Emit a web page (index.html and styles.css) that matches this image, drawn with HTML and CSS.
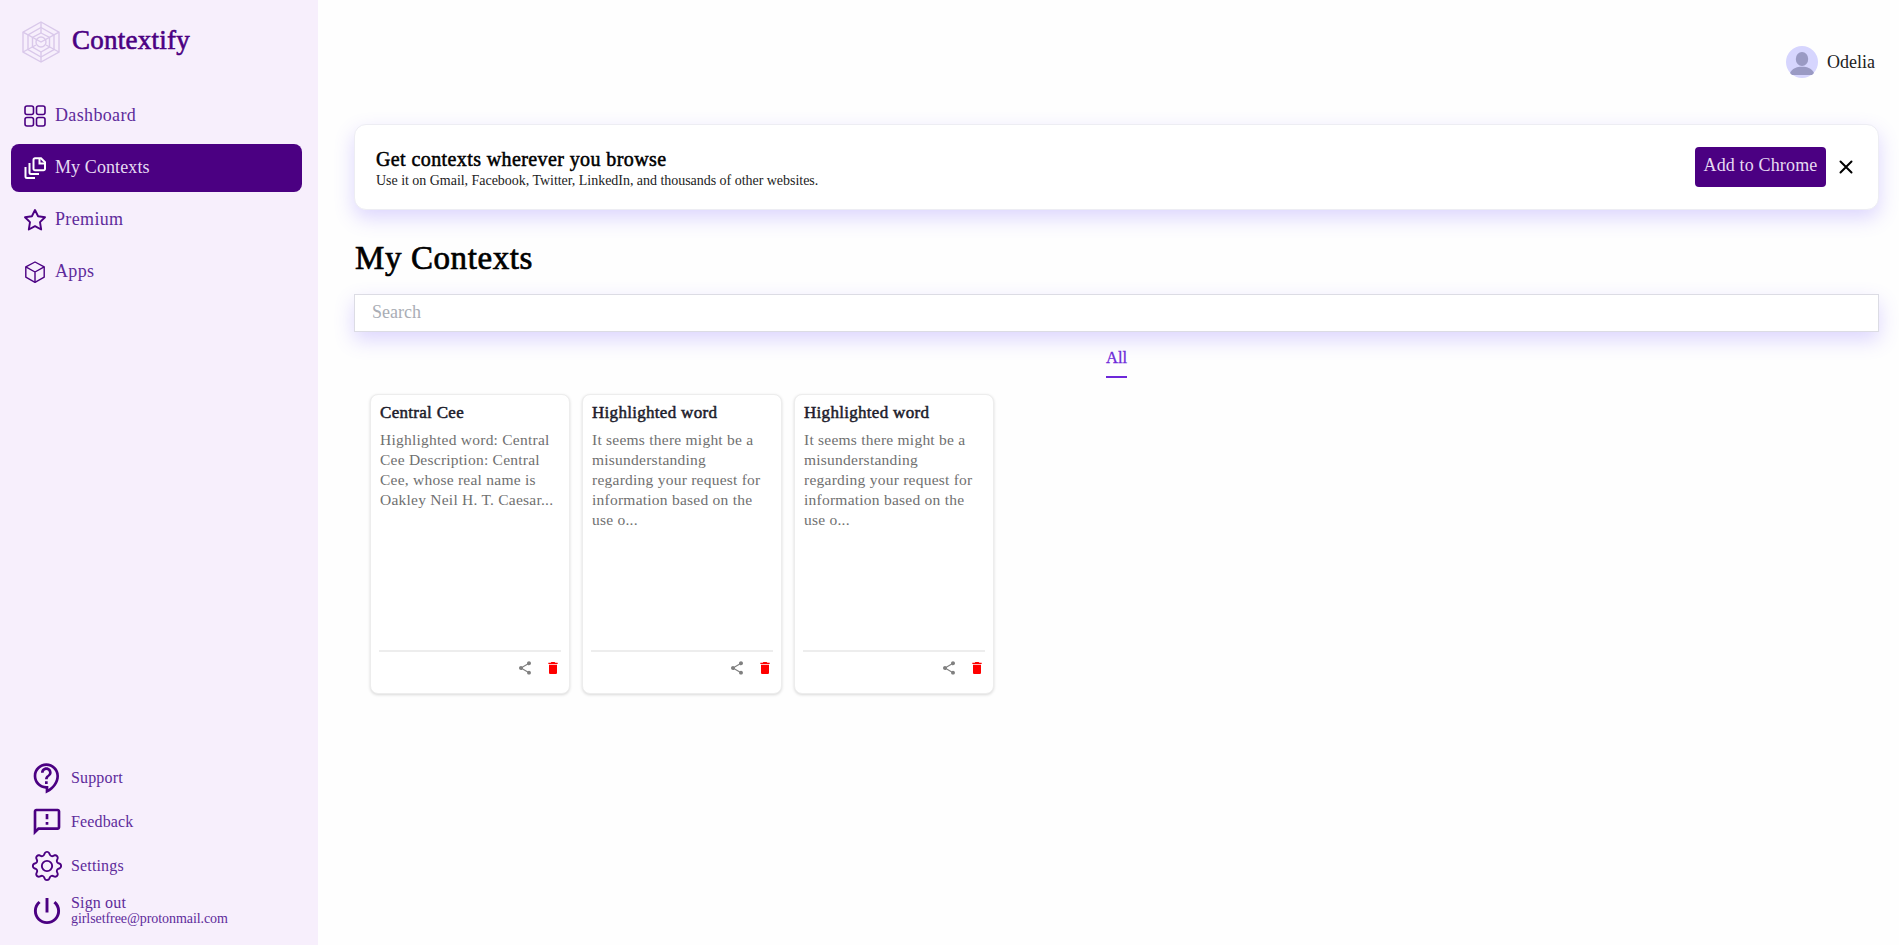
FILE: index.html
```html
<!DOCTYPE html>
<html lang="en">
<head>
  <meta charset="UTF-8">
  <title>Contextify</title>
  <meta name="viewport" content="width=device-width, initial-scale=1.0">
  <link rel="stylesheet" href="styles.css">
</head>
<body>
  <!-- icons shared by the cards -->
  <svg class="sprite" width="0" height="0">
    <symbol id="share" viewBox="0 0 24 24">
      <path d="M18 16.08c-.76 0-1.44.3-1.96.77L8.91 12.7c.05-.23.09-.46.09-.7s-.04-.47-.09-.7l7.05-4.11c.54.5 1.25.81 2.04.81 1.66 0 3-1.34 3-3s-1.34-3-3-3-3 1.34-3 3c0 .24.04.47.09.7L8.04 9.81C7.5 9.31 6.79 9 6 9c-1.66 0-3 1.34-3 3s1.34 3 3 3c.79 0 1.5-.31 2.04-.81l7.12 4.16c-.05.21-.08.43-.08.65 0 1.61 1.31 2.92 2.92 2.92s2.92-1.31 2.92-2.92-1.31-2.92-2.92-2.92z"/>
    </symbol>
    <symbol id="trash" viewBox="0 0 24 24">
      <path d="M6 19c0 1.1.9 2 2 2h8c1.100 0 2-.9 2-2V7H6v12zM19 4h-3.500l-1-1h-5l-1 1H5v2h14V4z"/>
    </symbol>
  </svg>

  <div class="layout">
    <aside class="sidebar">
      <div class="brand">
        <svg class="logo" viewBox="0 0 38 42" width="38" height="42">
          <path d="M19 1L37 11.200V31L19 41L1 31V11.200Z M19 6.500L32 14V28.500L19 36L6 28.500V14Z M19 12L27.500 16.500V26L19 31L10.500 26V16.500Z"/>
          <path d="M19 1V12M19 31V41M1 11.200L19 21L37 11.200M1 31L14 24M37 31L24 24"/>
          <circle cx="19" cy="21" r="5"/>
        </svg>
        <span class="brand-name">Contextify</span>
      </div>

      <nav class="nav">
        <a class="nav-item">
          <svg viewBox="0 0 24 24" width="24" height="24" class="line">
            <rect x="2" y="2" width="8.500" height="8.500" rx="2"/>
            <rect x="13.500" y="2" width="8.500" height="8.500" rx="2"/>
            <rect x="2" y="13.500" width="8.500" height="8.500" rx="2"/>
            <rect x="13.500" y="13.500" width="8.500" height="8.500" rx="2"/>
          </svg>
          <span>Dashboard</span>
        </a>
        <a class="nav-item active">
          <svg viewBox="0 0 24 24" width="24" height="24" class="line thick">
            <path d="M17.500 2.200h-5.500a1.500 1.500 0 0 0-1.500 1.500v9a1.500 1.500 0 0 0 1.500 1.500h8.500a1.500 1.500 0 0 0 1.500-1.500V6.200L18 2.200z"/>
            <path d="M16.500 2.500v5H21.500"/>
            <path d="M6.500 7v9.500a1.500 1.500 0 0 0 1.500 1.500H16"/>
            <path d="M2.500 11v9.500A1.500 1.500 0 0 0 4 22H12"/>
          </svg>
          <span>My Contexts</span>
        </a>
        <a class="nav-item">
          <svg viewBox="0 0 24 24" width="24" height="24" class="line star">
            <path d="M12 2L15.090 8.260L22 9.270L17 14.140L18.180 21.500L12 18.200L5.820 21.500L7 14.140L2 9.270L8.910 8.260Z"/>
          </svg>
          <span>Premium</span>
        </a>
        <a class="nav-item">
          <svg viewBox="0 0 24 24" width="24" height="24" class="line thin">
            <path d="M12 2L21.200 6.800V17.200L12 22.300L2.800 17.200V6.800Z"/>
            <path d="M2.800 6.800L12 12L21.200 6.800M12 12V22.300"/>
          </svg>
          <span>Apps</span>
        </a>
      </nav>

      <div class="bottom-nav">
        <a class="bottom-item">
          <svg viewBox="0 0 24 24" width="32" height="32">
            <path d="M11 23.590v-3.600c-5.010-.26-9-4.420-9-9.490C2 5.260 6.260 1 11.500 1S21 5.260 21 10.500c0 4.950-3.440 9.930-8.570 12.400l-1.430.69zM11.500 3C7.360 3 4 6.360 4 10.500S7.360 18 11.500 18H13v2.300c3.640-2.300 6-6.080 6-9.800C19 6.360 15.640 3 11.500 3zm-1 11.500h2v2h-2zm2-1.500h-2c0-3.250 3-3 3-5 0-1.100-.9-2-2-2s-2 .9-2 2h-2c0-2.210 1.790-4 4-4s4 1.790 4 4c0 2.500-3 2.750-3 5z"/>
          </svg>
          <span>Support</span>
        </a>
        <a class="bottom-item">
          <svg viewBox="0 0 24 24" width="32" height="32">
            <path d="M20 2H4c-1.100 0-1.990.9-1.990 2L2 22l4-4h14c1.100 0 2-.9 2-2V4c0-1.100-.9-2-2-2zm0 14H5.170L4 17.170V4h16v12zm-9-4h2v2h-2zm0-6h2v4h-2z"/>
          </svg>
          <span>Feedback</span>
        </a>
        <a class="bottom-item">
          <svg viewBox="-0.500 -0.500 17 17" width="32" height="32">
            <path d="M8 4.754a3.246 3.246 0 1 0 0 6.492 3.246 3.246 0 0 0 0-6.492zM5.754 8a2.246 2.246 0 1 1 4.492 0 2.246 2.246 0 0 1-4.492 0z"/>
            <path d="M9.796 1.343c-.527-1.790-3.065-1.790-3.592 0l-.094.319a.873.873 0 0 1-1.255.52l-.292-.16c-1.640-.892-3.433.902-2.540 2.541l.159.292a.873.873 0 0 1-.52 1.255l-.319.094c-1.790.527-1.790 3.065 0 3.592l.319.094a.873.873 0 0 1 .52 1.255l-.16.292c-.892 1.640.901 3.434 2.541 2.540l.292-.159a.873.873 0 0 1 1.255.52l.094.319c.527 1.790 3.065 1.790 3.592 0l.094-.319a.873.873 0 0 1 1.255-.52l.292.16c1.640.893 3.434-.902 2.540-2.541l-.159-.292a.873.873 0 0 1 .52-1.255l.319-.094c1.790-.527 1.790-3.065 0-3.592l-.319-.094a.873.873 0 0 1-.52-1.255l.16-.292c.893-1.640-.902-3.433-2.541-2.540l-.292.159a.873.873 0 0 1-1.255-.52l-.094-.319zm-2.633.283c.246-.835 1.428-.835 1.674 0l.094.319a1.873 1.873 0 0 0 2.693 1.115l.291-.16c.764-.415 1.600.42 1.184 1.185l-.159.292a1.873 1.873 0 0 0 1.116 2.692l.318.094c.835.246.835 1.428 0 1.674l-.319.094a1.873 1.873 0 0 0-1.115 2.693l.16.291c.415.764-.42 1.600-1.185 1.184l-.291-.159a1.873 1.873 0 0 0-2.693 1.116l-.094.318c-.246.835-1.428.835-1.674 0l-.094-.319a1.873 1.873 0 0 0-2.692-1.115l-.292.16c-.764.415-1.600-.42-1.184-1.185l.159-.291A1.873 1.873 0 0 0 1.945 8.930l-.319-.094c-.835-.246-.835-1.428 0-1.674l.319-.094A1.873 1.873 0 0 0 3.060 4.377l-.16-.292c-.415-.764.42-1.600 1.185-1.184l.292.159a1.873 1.873 0 0 0 2.692-1.115l.094-.319z"/>
          </svg>
          <span>Settings</span>
        </a>
        <a class="bottom-item sign-out">
          <svg viewBox="1 1 22 22" width="32" height="32">
            <path d="M13 3h-2v10h2V3zm4.830 2.170l-1.420 1.420C17.990 7.860 19 9.810 19 12c0 3.870-3.130 7-7 7s-7-3.130-7-7c0-2.190 1.010-4.140 2.580-5.420L6.170 5.170C4.230 6.820 3 9.260 3 12c0 4.970 4.030 9 9 9s9-4.030 9-9c0-2.740-1.230-5.180-3.170-6.830z"/>
          </svg>
          <div>
            Sign out
            <div class="email">girlsetfree@protonmail.com</div>
          </div>
        </a>
      </div>
    </aside>

    <main class="main">
      <header class="topbar">
        <svg class="avatar" viewBox="0 0 32 32" width="32" height="32">
          <circle cx="16" cy="16" r="16" fill="#d6d5fe"/>
          <ellipse cx="16" cy="13" rx="6.200" ry="7" fill="#9a9ac4"/>
          <path d="M4 27C6 22.500 10.500 20.700 16 20.700S26 22.500 28 27L26 29H6Z" fill="#9a9ac4"/>
        </svg>
        <span>Odelia</span>
      </header>

      <section class="banner">
        <div class="banner-text">
          <h2>Get contexts wherever you browse</h2>
          <p>Use it on Gmail, Facebook, Twitter, LinkedIn, and thousands of other websites.</p>
        </div>
        <button class="add">Add to Chrome</button>
        <svg class="close" viewBox="0 0 14 14" width="14" height="14">
          <path d="M1.500 1.500l11 11M12.500 1.500l-11 11"/>
        </svg>
      </section>

      <h1>My Contexts</h1>
      <input class="search" type="text" placeholder="Search">

      <div class="tabs"><a class="tab">All</a></div>

      <div class="cards">
        <article class="card">
          <h3>Central Cee</h3>
          <p>Highlighted word: Central Cee Description: Central Cee, whose real name is Oakley Neil H. T. Caesar...</p>
          <footer>
            <svg class="share" width="16" height="16"><use href="#share"/></svg>
            <svg class="trash" width="16" height="16"><use href="#trash"/></svg>
          </footer>
        </article>
        <article class="card">
          <h3>Highlighted word</h3>
          <p>It seems there might be a misunderstanding regarding your request for information based on the use o...</p>
          <footer>
            <svg class="share" width="16" height="16"><use href="#share"/></svg>
            <svg class="trash" width="16" height="16"><use href="#trash"/></svg>
          </footer>
        </article>
        <article class="card">
          <h3>Highlighted word</h3>
          <p>It seems there might be a misunderstanding regarding your request for information based on the use o...</p>
          <footer>
            <svg class="share" width="16" height="16"><use href="#share"/></svg>
            <svg class="trash" width="16" height="16"><use href="#trash"/></svg>
          </footer>
        </article>
      </div>
    </main>
  </div>
</body>
</html>
```

FILE: styles.css
```css
* {
  box-sizing: border-box;
}
body {
  margin: 0;
  font-family: "Liberation Serif", serif;
  font-size: 18px;
  color: #222;
  background: #fefefe;
}
h1,
h2,
h3,
p {
  margin: 0;
  font-weight: normal;
}
.sprite {
  display: block;
}
.layout {
  display: flex;
  height: 945px;
}

/* sidebar */
.sidebar {
  display: flex;
  flex-direction: column;
  flex: none;
  width: 318px;
  padding: 20px 16px 11px 11px;
  background: #f7effc;
  color: #5e2b9b;
}
.sidebar svg {
  flex: none;
  fill: #4b0082;
}
.brand {
  display: flex;
  align-items: center;
  gap: 12px;
  height: 44px;
  padding-left: 11px;
}
.sidebar .logo {
  fill: none;
  stroke: #d9c8ea;
  stroke-width: 1.400;
}
.brand-name {
  margin-top: -4px;
  font-size: 27px;
  line-height: 32px;
  letter-spacing: 0.25px;
  color: #4b0082;
  -webkit-text-stroke: 0.6px #4b0082;
}
.nav {
  display: flex;
  flex-direction: column;
  gap: 4px;
  margin-top: 28px;
}
.nav-item {
  display: flex;
  align-items: center;
  gap: 8px;
  height: 48px;
  padding: 0 0 1px 12px;
  border-radius: 8px;
  letter-spacing: 0.35px;
}
.nav-item.active {
  background: #4b0082;
  color: #e6daf2;
  letter-spacing: 0.1px;
}
.sidebar .line {
  fill: none;
  stroke: #4b0082;
  stroke-width: 1.600;
}
.sidebar .thick {
  stroke: #fff;
  stroke-width: 2;
}
.sidebar .thin {
  stroke-width: 1.400;
  stroke-linejoin: round;
}
.sidebar .star {
  stroke-width: 1.900;
  stroke-linejoin: round;
}
.bottom-nav {
  margin-top: auto;
  padding-left: 20px;
  font-size: 16px;
  letter-spacing: 0.15px;
}
.bottom-item {
  display: flex;
  align-items: center;
  gap: 8px;
  height: 44px;
}
.sign-out {
  height: 46px;
  line-height: 17px;
}
.sign-out div {
  margin-top: -1px;
}
.email {
  font-size: 14px;
  line-height: 17px;
  letter-spacing: -0.07px;
}

/* content */
.main {
  flex: 1;
  padding: 46px 20px 0 36px;
}
.topbar {
  display: flex;
  align-items: center;
  justify-content: flex-end;
  gap: 9px;
  height: 32px;
  padding-right: 4px;
}
.banner {
  display: flex;
  align-items: center;
  height: 86px;
  margin-top: 46px;
  padding: 0 25px 0 21px;
  border: 1px solid #ededf3;
  border-radius: 12px;
  background: #fff;
  box-shadow: 0 8px 20px rgba(112, 82, 255, 0.24);
}
.banner-text {
  flex: 1;
  padding-top: 3px;
}
.banner h2 {
  font-size: 20px;
  line-height: 24px;
  letter-spacing: 0.4px;
  color: #000;
  -webkit-text-stroke: 0.5px #000;
}
.banner p {
  font-size: 14px;
  line-height: 20px;
  letter-spacing: -0.03px;
}
.add {
  width: 131px;
  height: 40px;
  padding: 0 0 4px;
  border: 0;
  border-radius: 4px;
  background: #4b0082;
  color: #e6daf2;
  font: 18px "Liberation Serif", serif;
  letter-spacing: 0.15px;
}
.close {
  margin-left: 13px;
  fill: none;
  stroke: #000;
  stroke-width: 2;
  stroke-linecap: round;
}
h1 {
  margin-top: 28px;
  padding-left: 1px;
  font-size: 33px;
  line-height: 40px;
  letter-spacing: 0.6px;
  color: #000;
  -webkit-text-stroke: 0.7px #000;
}
.search {
  display: block;
  width: 100%;
  height: 38px;
  margin-top: 16px;
  padding: 0 17px 1px;
  border: 1px solid #dcdce4;
  background: #fff;
  font: 18px "Liberation Serif", serif;
  box-shadow: 0 8px 20px rgba(112, 82, 255, 0.24);
}
.search::placeholder {
  color: #a9adb5;
}
.tabs {
  display: flex;
  justify-content: center;
  margin-top: 10px;
}
.tab {
  width: 21px;
  height: 36px;
  border-bottom: 2px solid #6d28d9;
  font-size: 16.500px;
  line-height: 32px;
  color: #6d28d9;
  -webkit-text-stroke: 0.3px #6d28d9;
}
.cards {
  display: flex;
  gap: 12px;
  margin-top: 16px;
  padding-left: 16px;
}
.card {
  display: flex;
  flex-direction: column;
  width: 200px;
  height: 300px;
  padding: 8px 8px 7px;
  border: 1px solid #ededed;
  border-radius: 8px;
  background: #fff;
  box-shadow: 0 1px 3px rgba(0, 0, 0, 0.15);
}
.card h3 {
  padding-left: 1px;
  font-size: 17px;
  line-height: 20px;
  letter-spacing: 0.3px;
  color: #1c1c2b;
  -webkit-text-stroke: 0.5px #1c1c2b;
}
.card p {
  margin-top: 7px;
  padding: 0 5px 0 1px;
  font-size: 15.500px;
  line-height: 20px;
  letter-spacing: 0.24px;
  color: #707070;
}
.card footer {
  display: flex;
  justify-content: flex-end;
  gap: 12px;
  height: 36px;
  margin-top: auto;
  border-top: 2px solid #ededed;
  padding: 8px 0 0;
}
.share {
  fill: #808080;
}
.trash {
  fill: #f00;
}
```
